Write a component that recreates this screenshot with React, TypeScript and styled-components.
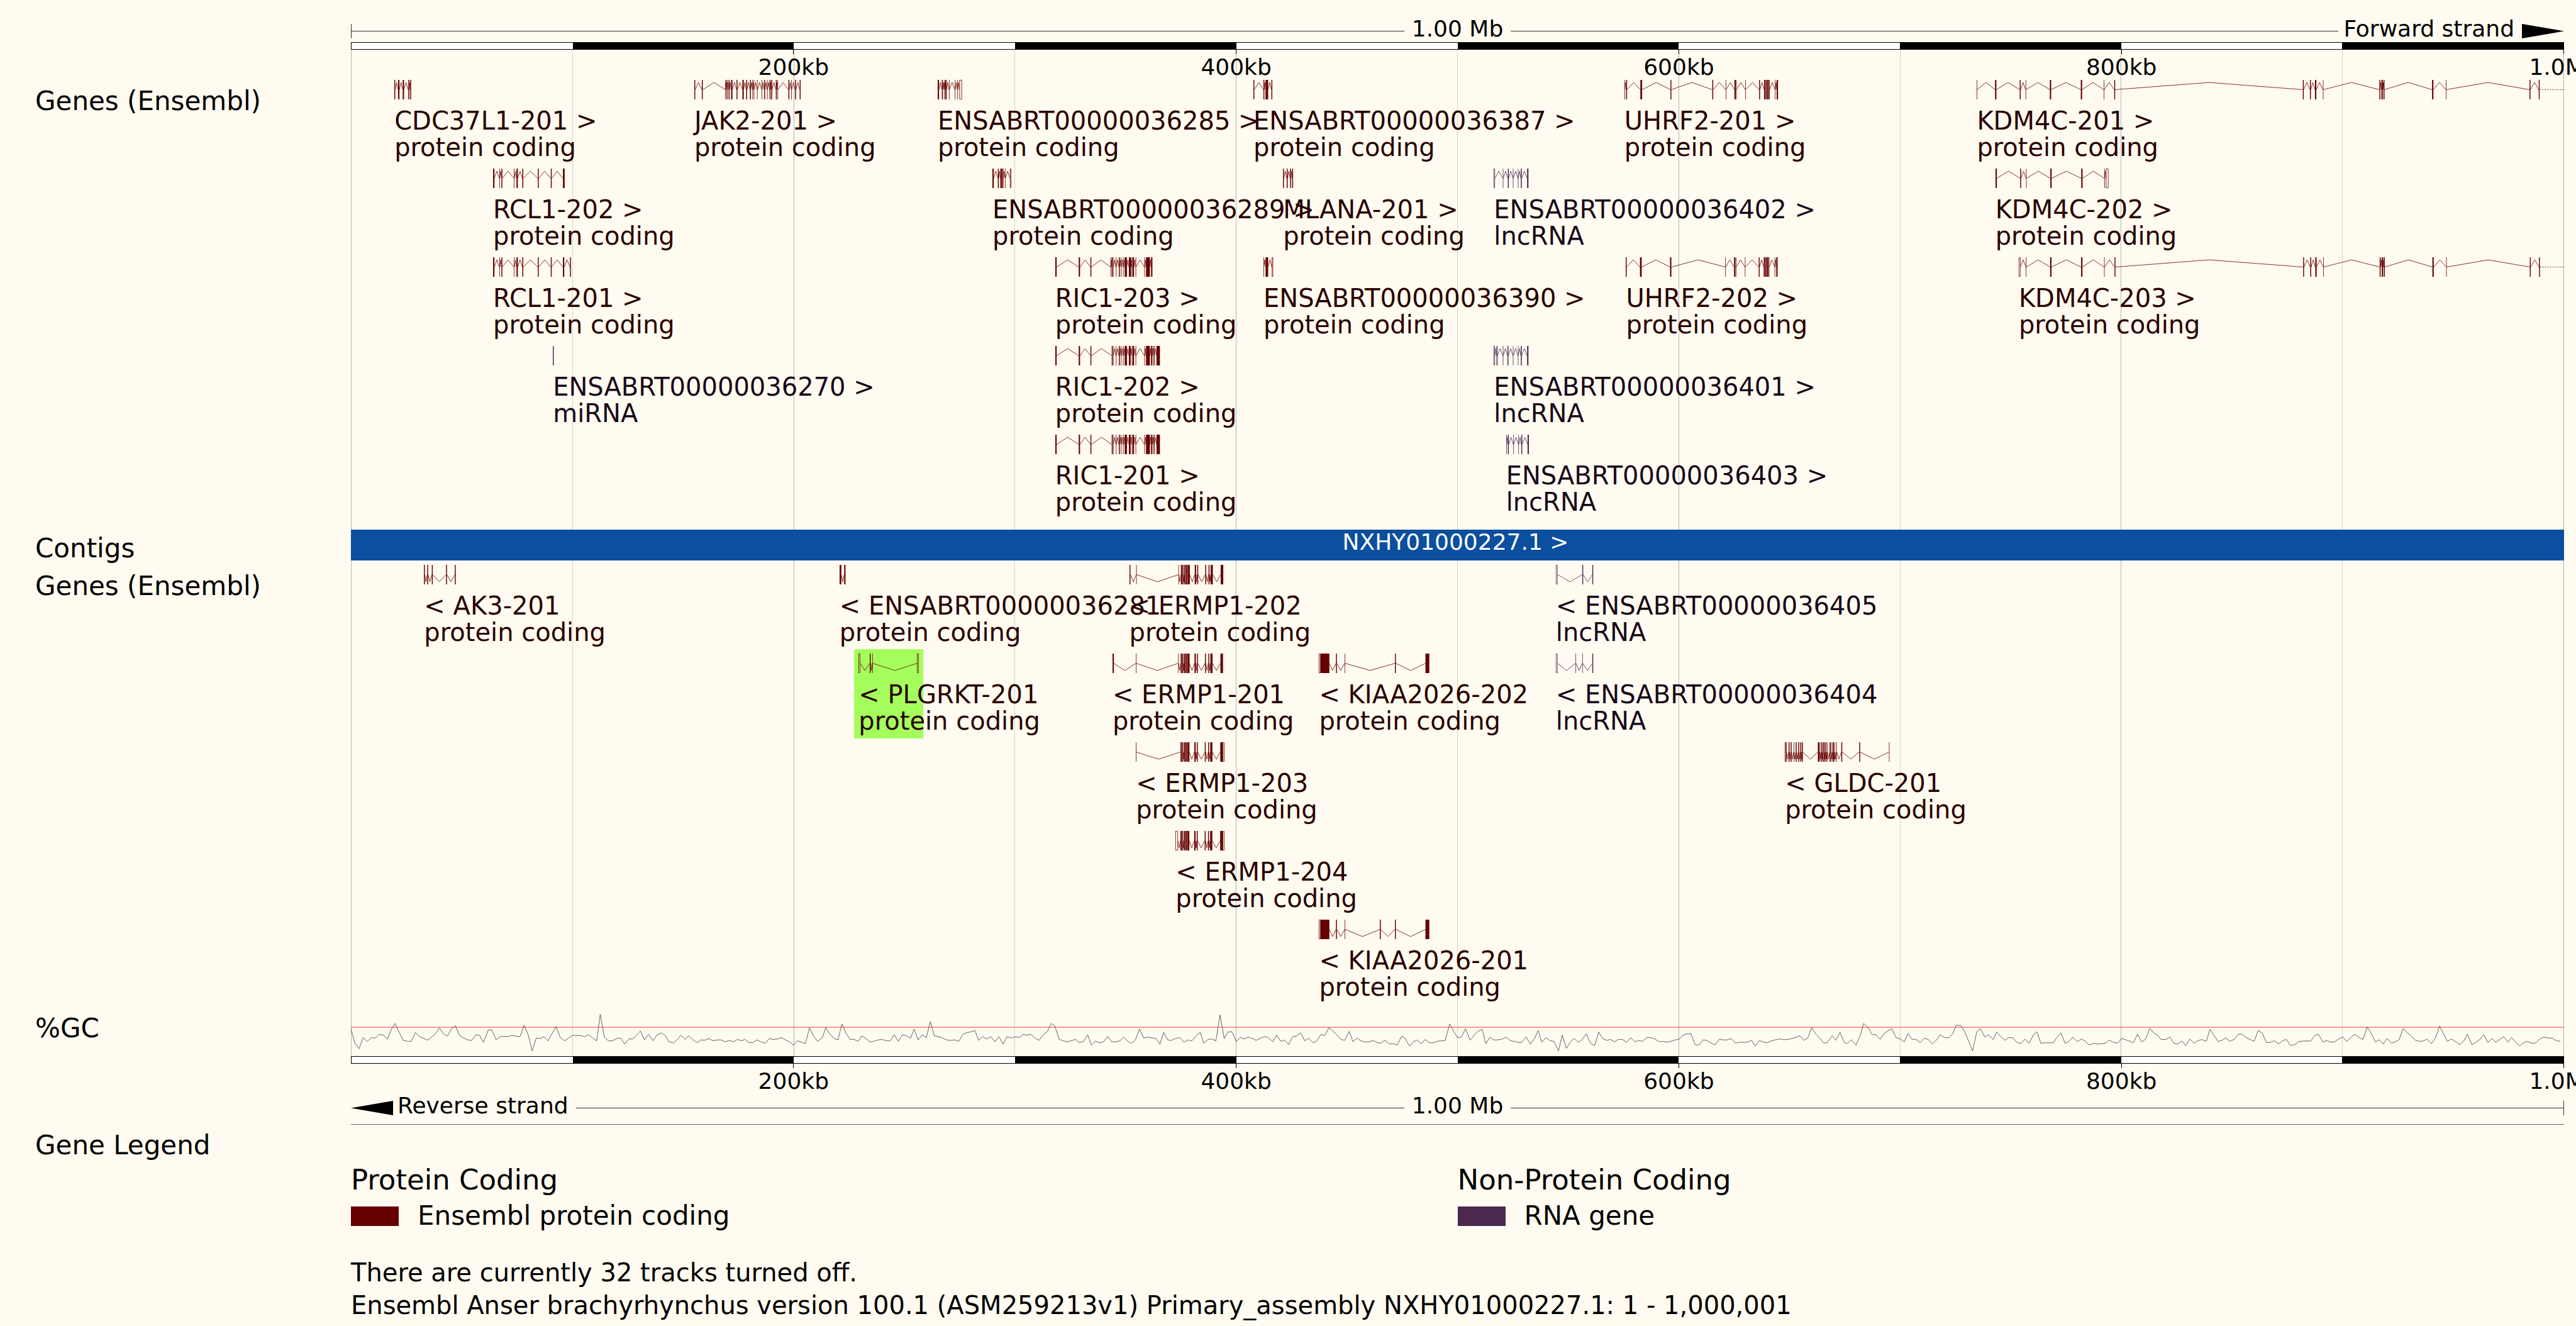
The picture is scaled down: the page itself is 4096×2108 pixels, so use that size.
import React from "react";
import styled, { createGlobalStyle } from "styled-components";

/* ---------- palette ---------- */
const INK = "#000000";
const PAPER = "#fffbf0";
const KIND = {
  coding: { glyph: "#660000", text: "#2a0000" },
  rna: { glyph: "#4a2850", text: "#180818" },
};

/* Horizontal units across the one-megabase region. */
const SPAN = 5292;
const percent = (units: number) => `${(units / SPAN) * 100}%`;

type Kind = keyof typeof KIND;
/* offset | [offset, width] | [offset, width, 1 = untranslated, drawn hollow] */
type Exon = number | [number, number] | [number, number, 1];
type Transcript = {
  name: string;
  type: string;
  at: number;
  exons: Exon[];
  kind?: Kind;
  tail?: number;
  marked?: boolean;
};

const coding = (name: string, at: number, exons: Exon[], extra: Partial<Transcript> = {}): Transcript => ({
  name,
  type: "protein coding",
  at,
  exons,
  kind: "coding",
  ...extra,
});
const rna = (name: string, at: number, exons: Exon[], type = "lncRNA"): Transcript => ({
  name,
  type,
  at,
  exons,
  kind: "rna",
});

const rcl: Exon[] = [[0, 3], [15, 1], 20, [50, 1], [56, 3], 70, 107, 138];
const ric: Exon[] = [[0, 3], [56, 3], 84, 135, [138, 1], [145, 1], 152, [157, 1], [162, 1], [166, 5], [176, 4], [183, 1], [185, 3], [192, 1], [213, 1], [217, 9], [229, 3], 235, [242, 8]];

/* Exons that all ERMP1 transcripts share, moved to a transcript's own start. */
const ermp = (from: number): Exon[] =>
  ([[0, 3], [4, 2], [8, 3], [12, 3], [16, 5], [33, 3], [39, 2], [58, 2], [66, 2], [71, 5], [95, 6]] as [number, number][]).map(
    ([o, w]) => [o + from, w] as Exon
  );

const forwardLanes: Transcript[][] = [
  [
    coding("CDC37L1-201 >", 104, [0, [9, 3], [20, 3], [33, 1], [35, 1], 38]),
    coding("JAK2-201 >", 821, [0, 18, [74, 1], 77, 82, [88, 3], 101, [115, 3], 124, 133, [139, 1], [142, 1], [150, 1], [161, 1], 167, [174, 1], 180, 184, 195, [199, 1], 225, [232, 1], 241, 252]),
    coding("ENSABRT00000036285 >", 1403, [[0, 3], 10, [15, 1], [18, 3], [27, 1], [41, 1], [47, 1], [52, 6, 1]]),
    coding("ENSABRT00000036387 >", 2158, [0, 24, [29, 6], 43]),
    coding("UHRF2-201 >", 3045, [[0, 1], 4, [38, 4], 110, 210, [242, 1], [263, 3], [267, 1], [289, 1], 322, [334, 3], 338, [341, 3], 345, [360, 1], [364, 3]]),
    coding("KDM4C-201 >", 3888, [[0, 1], [44, 3], 103, [117, 1], [175, 3], [249, 3], [304, 1], 329, 780, 797, [809, 3], [828, 1], 963, [968, 3], 973, [1089, 3], [1122, 1], 1322, 1344], { tail: 1404 }),
  ],
  [
    coding("RCL1-202 >", 340, [...rcl, [167, 4]]),
    coding("ENSABRT00000036289 >", 1534, [[0, 3], 13, [19, 4], 24, [30, 1], [42, 3, 1]]),
    coding("MLANA-201 >", 2229, [0, 9, 17, 22]),
    rna("ENSABRT00000036402 >", 2733, [[0, 3, 1], [22, 1], 34, [46, 1], [58, 1], 65, [80, 3]]),
    coding("KDM4C-202 >", 3932, [[0, 3], 59, [73, 1], [131, 3], [205, 3], [260, 1], [264, 6, 1]]),
  ],
  [
    coding("RCL1-201 >", 340, [...rcl, [167, 3], 184]),
    coding("RIC1-203 >", 1684, [[0, 3], [56, 3], 84, [132, 1], 135, [138, 1], [145, 1], 152, [157, 1], [162, 1], [166, 5], [176, 5], [183, 1], [185, 3], [192, 1], [213, 1], [217, 9], [229, 3]]),
    coding("ENSABRT00000036390 >", 2182, [[0, 1], [5, 6], [20, 3, 1]]),
    coding("UHRF2-202 >", 3049, [0, [34, 4], [106, 3], [238, 1], [259, 3], [263, 1], [285, 1], 318, [330, 3], 334, [337, 3], 341, [356, 1], [360, 3]]),
    coding("KDM4C-203 >", 3988, [[0, 4, 1], [17, 1], [75, 3], [149, 3], [204, 1], 229, 680, 697, [709, 3], [728, 1], 863, [868, 3], 873, [989, 3], [1022, 1], 1222, 1244], { tail: 1304 }),
  ],
  [
    rna("ENSABRT00000036270 >", 483, [0], "miRNA"),
    coding("RIC1-202 >", 1684, ric),
    rna("ENSABRT00000036401 >", 2733, [[0, 3, 1], 7, [22, 1], 33, [46, 1], [58, 1], 65, [80, 3]]),
  ],
  [
    coding("RIC1-201 >", 1684, ric),
    rna("ENSABRT00000036403 >", 2762, [[0, 1], 4, [17, 1], [29, 1], 36, [51, 3]]),
  ],
];

const reverseLanes: Transcript[][] = [
  [
    coding("< AK3-201", 175, [0, 8, 19, 53, 74]),
    coding("< ENSABRT00000036281", 1168, [[0, 4], [11, 3]]),
    coding("< ERMP1-202", 1861, [0, [16, 1], [117, 1], ...ermp(123)]),
    rna("< ENSABRT00000036405", 2881, [[0, 4, 1], 63, 87]),
  ],
  [
    coding("< PLGRKT-201", 1214, [[0, 4, 1], 27, [33, 1], [140, 4, 1]], { marked: true }),
    coding("< ERMP1-201", 1821, [[0, 3], [56, 1], [157, 1], ...ermp(163)]),
    coding("< KIAA2026-202", 2315, [[0, 4, 1], [4, 21], 41, [62, 1], 182, [255, 9]]),
    rna("< ENSABRT00000036404", 2881, [[0, 4, 1], [47, 1], [63, 1], 87]),
  ],
  [
    coding("< ERMP1-203", 1877, [[0, 1], ...ermp(107), [208, 4, 1]]),
    coding("< GLDC-201", 3429, [[0, 3, 1], [3, 1], 9, 14, [21, 1], 26, 32, 37, 41, [79, 4], 86, [90, 2], 93, 97, [101, 1], 107, [110, 1], [114, 3], [119, 1], [123, 1], 135, 178, [249, 1]]),
  ],
  [coding("< ERMP1-204", 1972, [[0, 6, 1], ...ermp(12), [113, 4, 1]])],
  [coding("< KIAA2026-201", 2315, [[0, 4, 1], [4, 21], 41, [62, 1], 146, 182, [255, 9]])],
];

/* GC content, sampled in three runs; each run has its own origin and step. */
const gcRuns = [
  {
    x: (v: number) => (v - 46) * 1.2143,
    y: (v: number) => v - 168,
    data: "46,288 54,380 62,415 70,343 78,369 86,343 94,346 102,322 110,328 118,352 126,288 133,253 141,310 149,361 157,367 165,367 173,310 181,337 189,348 197,360 205,340 213,316 220,281 228,318 236,334 244,286 252,268 260,331 268,346 276,358 284,361 292,325 299,327 307,374 316,297 323,292 332,358 340,338 347,335 355,337 363,329 371,334 379,337 387,264 395,325 403,429 411,346 419,349 426,337 434,364 442,318 450,274 458,341 467,364 474,348 482,329 498,331 506,337 514,325 522,346 530,364 537,195 545,340 553,364 561,364 569,349 577,346 585,385 593,352 601,352 609,325 616,301 624,358 632,322 641,364 649,326 657,313 665,330 672,370 681,377 688,358 696,328 704,355 711,331 719,357 728,376 735,358 743,360 751,349 759,364 767,358 775,358 783,370 791,361 799,370 807,355 815,363 822,355 830,376 838,374 846,358 854,372 862,380 870,349 878,355 886,352 894,343 902,358 909,369 917,391 925,364 933,372 941,382 949,281 957,334 965,367 974,345 981,280 989,320 997,348 1005,358 1013,256 1021,316 1029,355 1037,355 1045,368 1052,331 1060,350 1068,371 1076,367 1084,358 1092,355 1100,364 1108,364 1116,325 1124,367 1132,325 1140,333 1148,347 1155,289 1163,358 1171,325 1179,343 1187,241 1195,333 1203,337 1211,345 1219,358 1227,361 1235,358 1243,367 1251,322 1259,312 1267,306 1275,298 1282,361 1290,337 1298,352 1306,337 1314,370 1322,337 1330,385 1338,337 1346,346 1354,337 1362,343 1370,322 1377,328 1385,322 1393,347 1401,361 1409,325 1417,307 1425,253 1432,268 1441,355 1449,364 1457,370 1465,362 1473,355 1481,376 1489,367 1497,325 1504,391 1512,365 1520,377 1528,370 1536,335 1544,370 1552,370 1560,364",
  },
  {
    x: (v: number) => v * 1.10714 + 1848,
    y: (v: number) => v - 168,
    data: "0,340 8,365 16,380 25,358 34,289 43,346 52,340 60,345 69,349 78,385 86,310 95,358 103,361 112,349 121,343 130,373 139,358 147,364 157,330 165,310 173,379 182,355 190,352 199,364 208,198 217,349 225,307 234,307 243,368 252,343 260,352 269,340 277,348 286,361 295,347 304,337 312,343 322,370 330,328 339,367 347,359 356,388 365,337 373,334 382,313 391,364 399,347 409,376 417,364 426,322 434,331 443,280 452,303 460,325 469,355 477,361 487,304 495,370 504,347 512,364 521,371 530,371 538,361 547,374 555,380 564,359 574,385 582,382 591,391 600,334 607,345 617,397 626,368 634,359 643,382 651,355 660,376 669,376 677,367 694,362 704,256 713,305 721,344 729,340 738,287 748,360 756,330 765,303 774,289 782,382 791,341 799,358 808,358 817,353 825,340 835,362 843,368 859,376 869,338 878,385 887,350 895,298 903,373 912,344 921,364 929,367 939,428 947,328 956,412 965,370 973,349 982,373 990,355 999,319 1008,379 1017,395 1026,308 1034,349 1043,361 1051,355 1060,370 1068,355 1077,355 1086,373 1095,344 1104,370 1112,362 1121,367 1130,343 1138,343 1147,352 1156,370 1164,367 1173,373 1182,367 1190,359 1199,353 1208,328 1216,319 1225,319 1234,388 1242,391 1251,358 1259,361 1268,377 1277,391 1286,355 1295,358 1303,358 1312,349 1321,379 1329,373 1346,373 1356,361 1364,397 1373,361 1382,373 1390,376 1399,364 1408,357 1416,352 1425,357 1434,355 1442,350 1451,343 1460,331 1469,361 1477,347 1486,280 1495,322 1503,347 1512,379 1520,373 1530,332 1538,360 1547,310 1556,373",
  },
  {
    x: (v: number) => v * 1.2286 + 3393.6,
    y: (v: number) => v * 1.607 - 1728,
    data: "150,1208 158,1193 167,1215 175,1178 182,1128 190,1143 198,1171 206,1173 214,1191 222,1168 229,1158 237,1149 245,1184 253,1189 261,1202 268,1168 276,1191 284,1192 292,1204 300,1187 308,1192 316,1210 324,1193 331,1173 338,1183 347,1186 355,1170 362,1136 371,1136 379,1163 387,1202 394,1238 402,1162 409,1149 418,1182 425,1173 434,1192 441,1162 449,1180 457,1195 464,1184 473,1186 481,1205 488,1207 496,1191 504,1207 512,1175 519,1161 527,1207 536,1205 551,1205 558,1184 566,1165 574,1207 582,1199 589,1183 598,1200 606,1190 613,1198 621,1214 629,1207 637,1210 653,1207 660,1194 668,1203 676,1207 684,1188 692,1193 707,1204 715,1171 723,1202 731,1190 739,1147 747,1167 754,1175 761,1192 770,1192 778,1182 786,1207 794,1210 801,1198 809,1216 817,1190 825,1207 832,1197 840,1192 849,1199 856,1151 864,1176 872,1200 880,1194 887,1186 895,1199 903,1192 911,1171 919,1171 926,1184 942,1199 950,1156 958,1167 966,1204 973,1204 981,1197 990,1209 998,1196 1005,1192 1013,1216 1021,1212 1029,1200 1037,1198 1052,1198 1060,1176 1067,1171 1076,1202 1084,1196 1091,1203 1099,1201 1107,1189 1115,1182 1122,1200 1130,1184 1138,1171 1146,1184 1154,1192 1162,1142 1170,1168 1178,1202 1185,1193 1193,1210 1201,1188 1209,1207 1217,1201 1224,1193 1232,1149 1240,1165 1248,1178 1256,1195 1263,1199 1272,1198 1278,1190 1287,1208 1295,1186 1303,1138 1311,1170 1318,1199 1326,1190 1334,1200 1342,1213 1350,1198 1357,1171 1366,1213 1381,1192 1389,1173 1397,1204 1405,1188 1412,1203 1428,1181 1436,1202 1443,1184 1452,1205 1459,1217 1468,1202 1475,1200 1483,1208 1490,1205 1498,1190 1506,1182 1514,1186 1522,1186 1530,1197 1538,1199",
  },
];

const gcPoints = gcRuns
  .flatMap((run) =>
    run.data.split(" ").map((pair) => {
      const [px, py] = pair.split(",").map(Number);
      return `${run.x(px).toFixed(1)},${run.y(py).toFixed(1)}`;
    })
  )
  .join(" ");

/* ---------- styles ---------- */
const GlobalStyle = createGlobalStyle`
  html, body { margin: 0; background: ${PAPER}; }
  body {
    overflow: hidden;
    color: ${INK};
    font-family: Verdana, "DejaVu Sans", sans-serif;
  }
`;

const Page = styled.main`
  display: flex;
  flex-direction: column;
  min-height: 100vh;
  box-sizing: border-box;
  padding: 31px 19px 0 0;
  overflow: hidden;
`;

const Row = styled.section`
  display: grid;
  grid-template-columns: 502px minmax(0, 1fr);
  padding-left: 56px;
`;

const RowLabel = styled.h2<{ $top?: number }>`
  margin: 0;
  padding-top: ${(p) => p.$top ?? 0}px;
  font-size: 42px;
  font-weight: 400;
  line-height: 48px;
`;

const Canvas = styled.div`
  position: relative;
  grid-column: 2;
`;

const TrackCanvas = styled(Canvas)`
  padding: 1px 0 3px;
`;

const Guides = styled.div`
  position: absolute;
  inset: 0;
  display: grid;
  grid-template-columns: repeat(10, 1fr);
  border-right: 1px solid #b4b4b4;
`;

const Guide = styled.i<{ $major: boolean }>`
  border-left: 1px solid ${(p) => (p.$major ? "#b4b4b4" : "#d6d5cf")};
`;

const Strand = styled.div`
  grid-column: 2;
  display: grid;
  grid-template-columns: 1fr auto 1fr;
  grid-template-rows: 36px;
  align-items: center;
`;

const StrandSide = styled.div`
  display: flex;
  align-items: center;
`;

const Rule = styled.i`
  flex: 1;
  height: 1px;
  background: #333333;
`;

const EndStop = styled.i`
  width: 1px;
  height: 23px;
  background: #333333;
`;

const StrandText = styled.span<{ $before: number; $after: number }>`
  padding: 0 ${(p) => p.$after}px 6px ${(p) => p.$before}px;
  font-size: 36px;
  line-height: 36px;
  white-space: nowrap;
`;

const Arrow = styled.svg`
  display: block;
  width: 67px;
  height: 23px;
`;

const Ruler = styled.div`
  grid-column: 2;
  display: grid;
  grid-template-columns: repeat(10, 1fr);
  box-sizing: border-box;
  height: 12px;
  border: 1px solid ${INK};
`;

const Block = styled.i<{ $dark: boolean }>`
  background: ${(p) => (p.$dark ? INK : "#ffffff")};
`;

const Scale = styled.div<{ $height: number }>`
  position: relative;
  display: grid;
  grid-template-columns: repeat(5, 1fr);
  height: ${(p) => p.$height}px;
  margin: 0 -10% 0 10%;
`;

const Mark = styled.span`
  display: flex;
  flex-direction: column;
  align-items: center;
  gap: 3px;
  font-size: 36px;
  line-height: 36px;

  &::before {
    content: "";
    width: 1px;
    height: 7px;
    background: ${INK};
  }
`;

const Lane = styled.div`
  position: relative;
  height: 141px;
`;

const Feature = styled.div<{ $kind: Kind }>`
  position: absolute;
  top: 0;
  color: ${(p) => KIND[p.$kind].text};
`;

const Highlight = styled.i`
  position: absolute;
  inset: -7px -7px auto;
  height: 142px;
  background: #a4ff5c;
`;

const Glyph = styled.svg`
  position: relative;
  display: block;
  width: 100%;
  height: 31px;
  margin-bottom: 13px;
  overflow: visible;
`;

const FeatureText = styled.div`
  position: relative;
  font-size: 40px;
  line-height: 42px;
  white-space: nowrap;
`;

const ContigCanvas = styled(Canvas)`
  padding: 7px 0 6px;
`;

const Contig = styled.div`
  position: relative;
  box-sizing: border-box;
  height: 49px;
  padding: 2px 6px 0 0;
  background: #0c4f9e;
  color: #ffffff;
  font-size: 36px;
  line-height: 36px;
  text-align: center;
`;

const GcPlot = styled.svg`
  position: relative;
  display: block;
  width: 100%;
  height: 73px;
`;

const Divider = styled.hr`
  grid-column: 2;
  width: 100%;
  height: 1px;
  margin: 8px 0 0;
  border: 0;
  background: #666666;
`;

const Legend = styled.div`
  display: grid;
  grid-template-columns: 1fr 1fr;
  padding-top: 62px;
`;

const LegendTitle = styled.h3`
  margin: 0 0 7px;
  font-size: 45px;
  font-weight: 400;
  line-height: 52px;
`;

const LegendItem = styled.div`
  display: flex;
  align-items: center;
  gap: 30px;
  font-size: 42px;
  line-height: 48px;
`;

const Swatch = styled.i<{ $kind: Kind }>`
  width: 76px;
  height: 31px;
  background: ${(p) => KIND[p.$kind].glyph};
`;

const Spacer = styled.i`
  display: block;
  width: 4px;
  height: 15px;
  margin: 6px 0 19px;
  background: #ffffff;
`;

const Note = styled.p`
  grid-column: 2;
  margin: 0;
  font-size: 40px;
  line-height: 52px;
`;

/* ---------- parts ---------- */
const tenths = Array.from({ length: 10 }, (_, i) => i);

const GuideLines = () => (
  <Guides>
    {tenths.map((i) => (
      <Guide key={i} $major={i % 2 === 0} />
    ))}
  </Guides>
);

const RulerBar = () => (
  <Ruler>
    {tenths.map((i) => (
      <Block key={i} $dark={i % 2 === 1} />
    ))}
  </Ruler>
);

const ScaleMarks = ({ height }: { height: number }) => (
  <Scale $height={height}>
    {["200kb", "400kb", "600kb", "800kb", "1.0Mb"].map((mark) => (
      <Mark key={mark}>{mark}</Mark>
    ))}
  </Scale>
);

const normalise = (exon: Exon) => {
  const [x, w, hollow] = typeof exon === "number" ? [exon, 2, 0] : [exon[0], exon[1], exon[2] ?? 0];
  return { x, w, hollow: hollow === 1 };
};

const TranscriptView = ({ item, reverse }: { item: Transcript; reverse: boolean }) => {
  const kind = item.kind ?? "coding";
  const colour = KIND[kind].glyph;
  const exons = item.exons.map(normalise);
  const last = exons[exons.length - 1];
  const length = last.x + last.w;
  const peak = reverse ? 78 : 12;
  return (
    <Feature $kind={kind} style={{ left: percent(item.at), width: percent(length) }}>
      {item.marked && <Highlight />}
      <Glyph viewBox={`0 0 ${length} 90`} preserveAspectRatio="none" aria-hidden="true">
        {exons.slice(1).map((exon, i) => {
          const from = exons[i].x + exons[i].w;
          if (exon.x - from < 2) return null;
          return (
            <polyline
              key={i}
              points={`${from},45 ${(from + exon.x) / 2},${peak} ${exon.x},45`}
              fill="none"
              stroke={colour}
              strokeWidth="0.8"
              vectorEffect="non-scaling-stroke"
            />
          );
        })}
        {exons.map((exon, i) =>
          exon.hollow ? (
            <rect
              key={i}
              x={exon.x + 0.5}
              y="1"
              width={exon.w - 1}
              height="88"
              fill="none"
              stroke={colour}
              strokeWidth="0.8"
              vectorEffect="non-scaling-stroke"
            />
          ) : (
            <rect key={i} x={exon.x} y="0" width={exon.w + 0.2} height="90" fill={colour} />
          )
        )}
        {item.tail && (
          <line
            x1={last.x + last.w}
            x2={item.tail}
            y1="45"
            y2="45"
            stroke={colour}
            strokeWidth="0.8"
            strokeDasharray="2 2"
            vectorEffect="non-scaling-stroke"
          />
        )}
      </Glyph>
      <FeatureText>{item.name}</FeatureText>
      <FeatureText>{item.type}</FeatureText>
    </Feature>
  );
};

const GeneTrack = ({ lanes, reverse = false }: { lanes: Transcript[][]; reverse?: boolean }) => (
  <Row>
    <RowLabel $top={11}>Genes (Ensembl)</RowLabel>
    <TrackCanvas>
      <GuideLines />
      {lanes.map((lane, i) => (
        <Lane key={i}>
          {lane.map((item) => (
            <TranscriptView key={item.name} item={item} reverse={reverse} />
          ))}
        </Lane>
      ))}
    </TrackCanvas>
  </Row>
);

export default function App() {
  return (
    <>
      <GlobalStyle />
      <Page>
        <Row>
          <Strand>
            <StrandSide>
              <EndStop />
              <Rule />
            </StrandSide>
            <StrandText $before={12} $after={12}>1.00 Mb</StrandText>
            <StrandSide>
              <Rule />
              <StrandText $before={8} $after={12}>Forward strand</StrandText>
              <Arrow viewBox="0 0 67 23" aria-hidden="true">
                <path d="M0 0 67 11.5 0 23Z" />
              </Arrow>
            </StrandSide>
          </Strand>
          <RulerBar />
          <Canvas>
            <GuideLines />
            <ScaleMarks height={47} />
          </Canvas>
        </Row>

        <GeneTrack lanes={forwardLanes} />

        <Row>
          <RowLabel $top={13}>Contigs</RowLabel>
          <ContigCanvas>
            <GuideLines />
            <Contig>NXHY01000227.1 &gt;</Contig>
          </ContigCanvas>
        </Row>

        <GeneTrack lanes={reverseLanes} reverse />

        <Row>
          <RowLabel $top={5}>%GC</RowLabel>
          <Canvas>
            <GuideLines />
            <GcPlot viewBox="0 0 5292 294" preserveAspectRatio="none" role="img" aria-label="GC content">
              <polyline points={gcPoints} fill="none" stroke="#333333" strokeWidth="0.75" vectorEffect="non-scaling-stroke" />
              <line x1="0" x2="5292" y1="109" y2="109" stroke="#ff0000" strokeWidth="0.75" vectorEffect="non-scaling-stroke" />
            </GcPlot>
          </Canvas>
        </Row>

        <Row>
          <RulerBar />
          <Canvas>
            <ScaleMarks height={52} />
          </Canvas>
          <Strand>
            <StrandSide>
              <Arrow viewBox="0 0 67 23" aria-hidden="true">
                <path d="M67 0 0 11.5 67 23Z" />
              </Arrow>
              <StrandText $before={7} $after={12}>Reverse strand</StrandText>
              <Rule />
            </StrandSide>
            <StrandText $before={12} $after={12}>1.00 Mb</StrandText>
            <StrandSide>
              <Rule />
              <EndStop />
            </StrandSide>
          </Strand>
          <Divider />
        </Row>

        <Row>
          <RowLabel $top={9}>Gene Legend</RowLabel>
          <Legend>
            <div>
              <LegendTitle>Protein Coding</LegendTitle>
              <LegendItem>
                <Swatch $kind="coding" />
                Ensembl protein coding
              </LegendItem>
              <Spacer />
            </div>
            <div>
              <LegendTitle>Non-Protein Coding</LegendTitle>
              <LegendItem>
                <Swatch $kind="rna" />
                RNA gene
              </LegendItem>
            </div>
          </Legend>
          <Note>There are currently 32 tracks turned off.</Note>
          <Note>Ensembl Anser brachyrhynchus version 100.1 (ASM259213v1) Primary_assembly NXHY01000227.1: 1 - 1,000,001</Note>
        </Row>
      </Page>
    </>
  );
}
